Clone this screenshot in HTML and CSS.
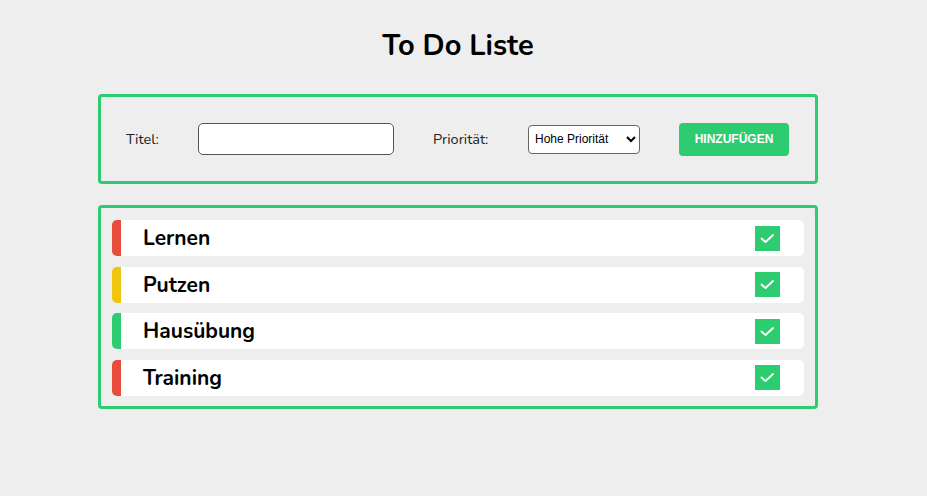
FILE: index.html
```html
<!DOCTYPE html>
<html lang="de">
<head>
<meta charset="utf-8">
<title>To Do Liste</title>
<link rel="stylesheet" href="styles.css">
</head>
<body>
<main class="app">
  <h1 class="title">To Do Liste</h1>
  <form class="panel form-panel">
    <label class="label label-titel" for="titel">Titel:</label>
    <input class="text-input" id="titel" type="text">
    <label class="label label-prio" for="prio">Priorität:</label>
    <select class="select" id="prio">
      <option>Hohe Priorität</option>
      <option>Mittlere Priorität</option>
      <option>Niedrige Priorität</option>
    </select>
    <button class="add-btn" type="button">HINZUFÜGEN</button>
  </form>
  <ul class="panel todo-list">
    <li class="todo prio-high"><span class="todo-text">Lernen</span><span class="check"><svg viewBox="0 0 25 25" width="25" height="25"><polyline points="6.5,12.5 10.5,16 18,9" fill="none" stroke="#fff" stroke-width="1.8" stroke-linecap="round" stroke-linejoin="round"/></svg></span></li>
    <li class="todo prio-mid"><span class="todo-text">Putzen</span><span class="check"><svg viewBox="0 0 25 25" width="25" height="25"><polyline points="6.5,12.5 10.5,16 18,9" fill="none" stroke="#fff" stroke-width="1.8" stroke-linecap="round" stroke-linejoin="round"/></svg></span></li>
    <li class="todo prio-low"><span class="todo-text">Hausübung</span><span class="check"><svg viewBox="0 0 25 25" width="25" height="25"><polyline points="6.5,12.5 10.5,16 18,9" fill="none" stroke="#fff" stroke-width="1.8" stroke-linecap="round" stroke-linejoin="round"/></svg></span></li>
    <li class="todo prio-high"><span class="todo-text">Training</span><span class="check"><svg viewBox="0 0 25 25" width="25" height="25"><polyline points="6.5,12.5 10.5,16 18,9" fill="none" stroke="#fff" stroke-width="1.8" stroke-linecap="round" stroke-linejoin="round"/></svg></span></li>
  </ul>
</main>
</body>
</html>
```
FILE: styles.css
```css
html, body {
  margin: 0;
  padding: 0;
  background: #eeeeee;
}
body {
  padding-right: 11px;
  font-family: "Nunito", Lato, "Noto Sans", sans-serif;
  color: #000;
}
.app {
  width: 720px;
  margin: 0 auto;
  padding-top: 28px;
}
.title {
  margin: 0;
  height: 66px;
  font-size: 29px;
  line-height: 36px;
  font-weight: 700;
  text-align: center;
  color: #000;
}
.panel {
  border: 3px solid #2ecc71;
  border-radius: 4px;
  box-sizing: border-box;
}
.form-panel {
  margin: 0;
  height: 90px;
  display: flex;
  align-items: center;
  gap: 39px;
  padding: 0 25px;
}
.label {
  font-size: 14.5px;
  color: #222;
  white-space: nowrap;
}
.label-titel { width: 33px; }
.label-prio { width: 56px; }
.text-input {
  width: 196px;
  height: 32px;
  box-sizing: border-box;
  border: 1px solid #555;
  border-radius: 5px;
  background: #fff;
  margin: 0;
}
.select {
  width: 112px;
  height: 29px;
  box-sizing: border-box;
  border: 1px solid #666;
  border-radius: 4px;
  background: #fff;
  font-family: "Liberation Sans", Arial, sans-serif;
  font-size: 12px;
  color: #000;
  margin: 0;
  padding: 0 2px;
}
.add-btn {
  width: 110px;
  height: 33px;
  border: none;
  border-radius: 4px;
  background: #2ecc71;
  color: #fff;
  font-family: "Liberation Sans", Arial, sans-serif;
  font-weight: 700;
  font-size: 12px;
  margin: 0;
  padding: 0;
}
.todo-list {
  list-style: none;
  margin: 21px 0 0;
  padding: 12px 11px 10px;
  display: flex;
  flex-direction: column;
  gap: 10.5px;
}
.todo {
  height: 36px;
  background: #fff;
  border-left: 9px solid #e74c3c;
  border-radius: 5px;
  display: flex;
  align-items: center;
  justify-content: space-between;
  padding: 0 24px 0 22px;
}
.prio-high { border-left-color: #e74c3c; }
.prio-mid { border-left-color: #f1c40f; }
.prio-low { border-left-color: #2ecc71; }
.todo-text {
  font-size: 21px;
  font-weight: 700;
  color: #000;
}
.check {
  width: 25px;
  height: 25px;
  background: #2ecc71;
  display: block;
}
.check svg {
  display: block;
}
```
